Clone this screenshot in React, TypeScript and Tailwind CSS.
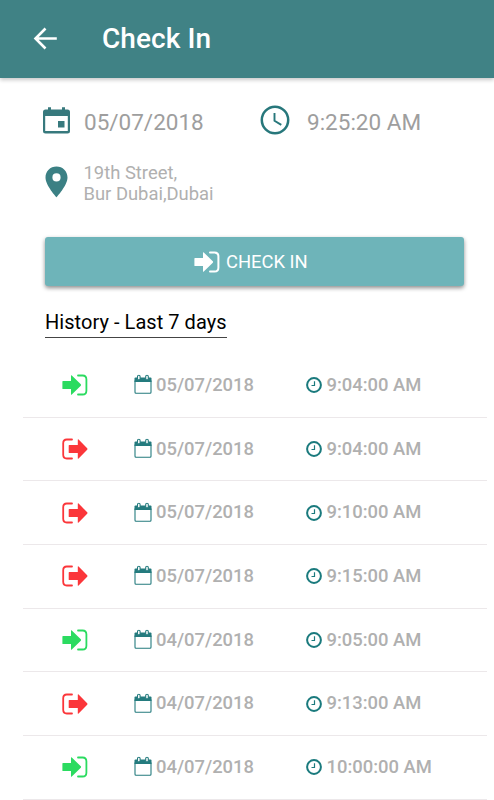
import React from "react";

type Entry = { dir: "in" | "out"; date: string; time: string };

const entries: Entry[] = [
  { dir: "in", date: "05/07/2018", time: "9:04:00 AM" },
  { dir: "out", date: "05/07/2018", time: "9:04:00 AM" },
  { dir: "out", date: "05/07/2018", time: "9:10:00 AM" },
  { dir: "out", date: "05/07/2018", time: "9:15:00 AM" },
  { dir: "in", date: "04/07/2018", time: "9:05:00 AM" },
  { dir: "out", date: "04/07/2018", time: "9:13:00 AM" },
  { dir: "in", date: "04/07/2018", time: "10:00:00 AM" },
];

function SignIn({ className, stroke = 1.8 }: { className: string; stroke?: number }) {
  return (
    <svg viewBox="0 0 26 22" className={`h-[22px] w-[26px] shrink-0 ${className}`}>
      <path d="M1 6.900h8V1.800q0-1 .8-.3l9 8.800q.6.700 0 1.400l-9 8.800q-.8.700-.8-.3v-5.100H1q-.6 0-.6-.6V7.500q0-.6.6-.6z" fill="currentColor" />
      <path d="M16 1.500h4.600q3.800 0 3.800 3.800v11.400q0 3.800-3.800 3.800H16" fill="none" stroke="currentColor" strokeWidth={stroke} strokeLinecap="round" />
    </svg>
  );
}

function SignOut({ className }: { className: string }) {
  return (
    <svg viewBox="0 0 26 22" className={`h-[22px] w-[26px] shrink-0 ${className}`}>
      <path d="M7.300 6.900h8.500V1.800q0-1 .8-.3l8.600 8.800q.6.700 0 1.400l-8.600 8.800q-.8.700-.8-.3v-5.100H7.300q-.6 0-.6-.6V7.500q0-.6.6-.6z" fill="currentColor" />
      <path d="M10 1.500H4.800Q1.200 1.500 1.200 5.200v11.600q0 3.700 3.600 3.700H10" fill="none" stroke="currentColor" strokeWidth="1.800" strokeLinecap="round" />
    </svg>
  );
}

function CalendarOutline() {
  return (
    <svg viewBox="0 0 18 20" className="h-5 w-[18px] shrink-0 -translate-y-[0.500px] text-[#247b7e]">
      <path d="M1.500 3h15q1 0 1 1v3.400H.5V4q0-1 1-1z" fill="currentColor" />
      <path d="M1 6v11.700q0 1 1 1h14q1 0 1-1V6" fill="none" stroke="currentColor" strokeWidth="1.100" />
      <rect x="3.500" y=".8" width="2.600" height="4.600" rx="1.200" fill="white" stroke="currentColor" strokeWidth="1.100" />
      <rect x="11.700" y=".8" width="2.600" height="4.600" rx="1.200" fill="white" stroke="currentColor" strokeWidth="1.100" />
    </svg>
  );
}

function ClockSmall() {
  return (
    <svg viewBox="0 0 16 16" className="h-4 w-4 shrink-0 text-[#1a7a7d]" fill="none" stroke="currentColor">
      <circle cx="8" cy="8" r="6.900" strokeWidth="2" />
      <path d="M8.500 4.300v4.200h-3" strokeWidth="1.200" />
    </svg>
  );
}

export default function App() {
  return (
    <div className="flex h-[800px] w-[494px] flex-col overflow-hidden bg-white font-['Roboto',sans-serif]">
      <header className="flex h-[78px] shrink-0 items-center bg-[#408285] pl-[33px] text-white shadow-[0_2px_4px_rgba(0,0,0,0.22)]">
        <svg viewBox="0 0 24 24" className="h-6 w-6" fill="none" stroke="currentColor" strokeWidth="2.600">
          <path d="M23.800 11.500H3M12.500 1.500 2.500 11.500 12.500 21.500" />
        </svg>
        <h1 className="ml-[45px] text-[28px] leading-8 font-medium tracking-[0.080px]">Check In</h1>
      </header>

      <section className="mt-[26px] flex h-8 shrink-0 items-center pl-[43px] text-[#9e9e9e]">
        <svg viewBox="0 0 27 27" className="h-[27px] w-[27px] text-[#37797d]">
          <path d="M2.500 2.500H5V.3h3v2.200h11V.3h3v2.200h2.500Q27 2.500 27 5v19q0 2.500-2.500 2.500h-22Q0 26.500 0 24V5q0-2.500 2.500-2.500zM2.200 9v15h22.600V9z" fill="currentColor" fillRule="evenodd" />
          <rect x="15" y="14" width="6.500" height="6.500" fill="currentColor" />
        </svg>
        <span className="ml-[14px] w-[176px] pt-[4px] text-[22.500px] leading-7">05/07/2018</span>
        <svg viewBox="0 0 30 30" className="h-[30px] w-[30px] text-[#27777b]" fill="none" stroke="currentColor">
          <circle cx="15" cy="15" r="13.200" strokeWidth="2.500" />
          <path d="M14.500 8v7.700l6.800 4.200" strokeWidth="1.900" />
        </svg>
        <span className="ml-[17px] pt-[4px] text-[22.500px] leading-7">9:25:20 AM</span>
      </section>

      <section className="mt-[26px] flex h-[42px] shrink-0 pl-[45px] text-[#b0b0b0]">
        <svg viewBox="0 0 23 32" className="mt-[4px] h-8 w-[23px]">
          <path d="M11.500.500C5.200.500.500 5.300.500 11.500c0 8 11 19.800 11 19.800s11-11.800 11-19.800c0-6.200-4.700-11-11-11zm0 6.800a4.100 4.100 0 1 1 0 8.200 4.100 4.100 0 0 1 0-8.200z" fill="#3b8084" fillRule="evenodd" />
        </svg>
        <p className="ml-[15.500px] text-[18.400px] leading-[21px]">19th Street,<br />Bur Dubai,Dubai</p>
      </section>

      <button className="mt-[33px] ml-[45px] flex h-[49px] w-[419px] shrink-0 items-center rounded-[3px] bg-[#6eb4b9] pl-[149px] text-[18.400px] text-white shadow-[0_2px_4px_rgba(0,0,0,0.45)]">
        <SignIn className="mr-[6px] text-white" stroke={2} />
        <span>CHECK IN</span>
      </button>

      <div className="mt-[21px] ml-[45px] flex h-[32px] shrink-0">
        <h2 className="h-[31px] border-b border-[#444] pt-px text-[20px] leading-7 tracking-[0.050px] text-black">History - Last 7 days</h2>
      </div>

      <ul className="mt-[15px] ml-[23px] w-[464px]">
        {entries.map((entry, i) => (
          <li key={i} className="flex h-[63.700px] items-center border-b border-[#ece8ea] pl-[39px] text-[18.400px] font-medium text-[#b0b0b0]">
            {entry.dir === "in" ? <SignIn className="text-[#2bdb60]" /> : <SignOut className="text-[#fb363a]" />}
            <div className="ml-[46px] flex w-[172px] items-center">
              <CalendarOutline />
              <span className="ml-[4px] pb-px">{entry.date}</span>
            </div>
            <ClockSmall />
            <span className="ml-[4.500px] pb-px">{entry.time}</span>
          </li>
        ))}
      </ul>
    </div>
  );
}
